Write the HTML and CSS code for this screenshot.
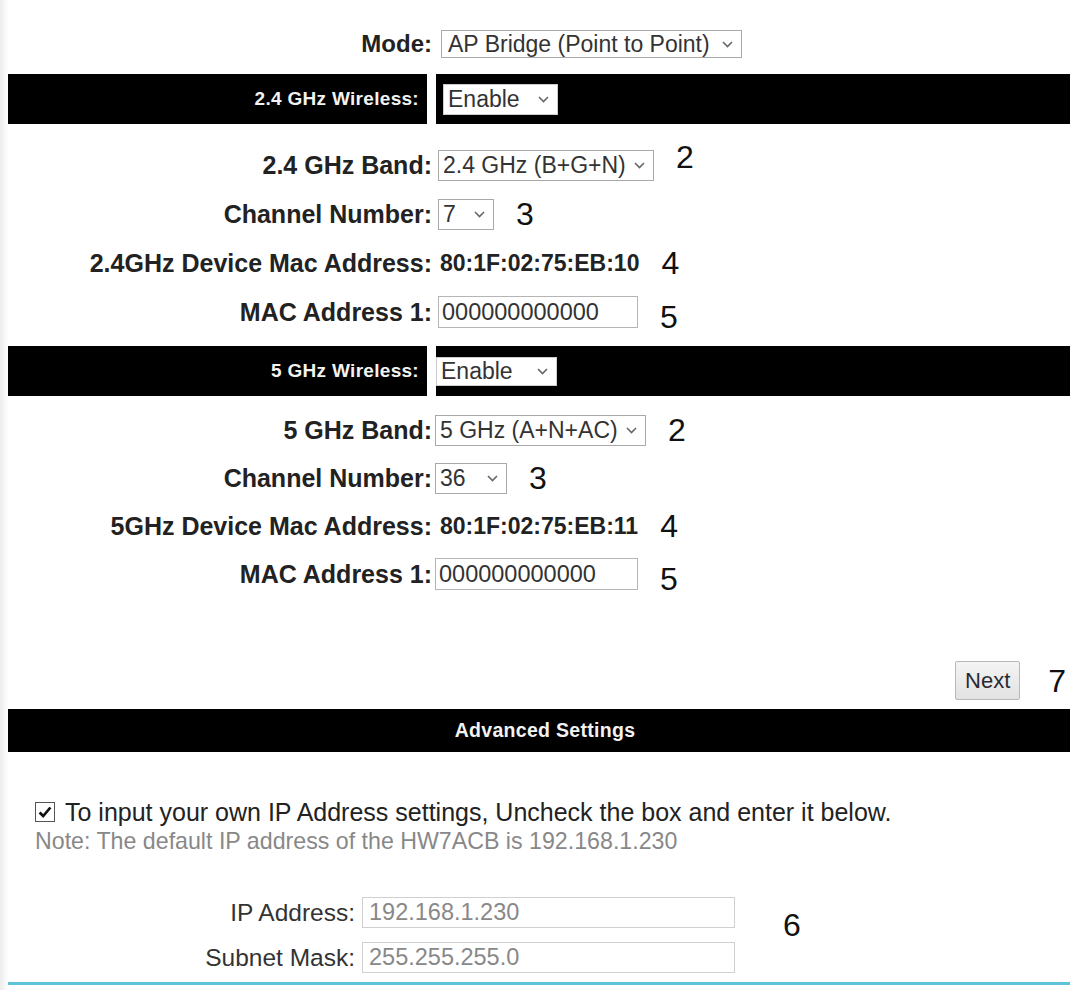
FILE: index.html
```html
<!DOCTYPE html>
<html lang="en">
<head>
<meta charset="utf-8">
<title>Wireless Setup</title>
<link rel="stylesheet" href="styles.css">
</head>
<body>
<div class="page">
  <div class="row mode-row">
    <span class="lbl">Mode:</span>
    <span class="sel w-mode">AP Bridge (Point to Point)<svg class="chev" viewBox="0 0 11 7"><path d="M1 1 L5.5 5.5 L10 1"/></svg></span>
  </div>

  <div class="bar">
    <div class="bar-lbl">2.4 GHz Wireless:</div>
    <div class="bar-val"><span class="sel sel-enable">Enable<svg class="chev" viewBox="0 0 11 7"><path d="M1 1 L5.5 5.5 L10 1"/></svg></span></div>
  </div>

  <div class="section s1">
    <div class="row">
      <span class="lbl">2.4 GHz Band:</span>
      <span class="sel w-band24">2.4 GHz (B+G+N)<svg class="chev" viewBox="0 0 11 7"><path d="M1 1 L5.5 5.5 L10 1"/></svg></span>
      <span class="ann up">2</span>
    </div>
    <div class="row">
      <span class="lbl">Channel Number:</span>
      <span class="sel w-ch7">7<svg class="chev" viewBox="0 0 11 7"><path d="M1 1 L5.5 5.5 L10 1"/></svg></span>
      <span class="ann">3</span>
    </div>
    <div class="row">
      <span class="lbl">2.4GHz Device Mac Address:</span>
      <span class="val">80:1F:02:75:EB:10</span>
      <span class="ann">4</span>
    </div>
    <div class="row">
      <span class="lbl">MAC Address 1:</span>
      <span class="inp w-mac">000000000000</span>
      <span class="ann down">5</span>
    </div>
  </div>

  <div class="bar">
    <div class="bar-lbl">5 GHz Wireless:</div>
    <div class="bar-val b2"><span class="sel sel-enable en2">Enable<svg class="chev" viewBox="0 0 11 7"><path d="M1 1 L5.5 5.5 L10 1"/></svg></span></div>
  </div>

  <div class="section s2">
    <div class="row">
      <span class="lbl">5 GHz Band:</span>
      <span class="sel w-band5">5 GHz (A+N+AC)<svg class="chev" viewBox="0 0 11 7"><path d="M1 1 L5.5 5.5 L10 1"/></svg></span>
      <span class="ann">2</span>
    </div>
    <div class="row">
      <span class="lbl">Channel Number:</span>
      <span class="sel w-ch36">36<svg class="chev" viewBox="0 0 11 7"><path d="M1 1 L5.5 5.5 L10 1"/></svg></span>
      <span class="ann">3</span>
    </div>
    <div class="row">
      <span class="lbl">5GHz Device Mac Address:</span>
      <span class="val">80:1F:02:75:EB:11</span>
      <span class="ann">4</span>
    </div>
    <div class="row">
      <span class="lbl">MAC Address 1:</span>
      <span class="inp w-mac2">000000000000</span>
      <span class="ann down">5</span>
    </div>
  </div>

  <div class="next-row">
    <span class="btn">Next</span>
    <span class="ann ann7">7</span>
  </div>

  <div class="adv-bar">Advanced Settings</div>

  <div class="check-line">
    <span class="cbox"><svg viewBox="0 0 20 20"><path d="M4 10.5 L8 14.5 L16 5"/></svg></span>
    <span>To input your own IP Address settings, Uncheck the box and enter it below.</span>
  </div>
  <div class="note">Note: The default IP address of the HW7ACB is 192.168.1.230</div>

  <div class="ip-block">
    <div class="ip-rows">
      <div class="ip-row">
        <span class="ip-lbl">IP Address:</span>
        <span class="ip-inp">192.168.1.230</span>
      </div>
      <div class="ip-row">
        <span class="ip-lbl">Subnet Mask:</span>
        <span class="ip-inp">255.255.255.0</span>
      </div>
    </div>
    <span class="ann ann6">6</span>
  </div>

  <div class="rule"></div>
</div>
</body>
</html>
```

FILE: styles.css
```css
html, body {
  margin: 0;
  padding: 0;
  background: #fff;
}

body {
  font-family: "Liberation Sans", Arial, sans-serif;
  color: #222;
  background: linear-gradient(to right, #ececec 0, #fafafa 6px, #fff 9px);
  min-height: 990px;
}

.page {
  padding: 0 8px;
  display: flex;
  flex-direction: column;
}

.row {
  display: flex;
  align-items: center;
  height: 32px;
}

.mode-row {
  margin-top: 30px;
  height: 28px;
}

.lbl {
  width: 424px;
  flex: none;
  text-align: right;
  font-weight: bold;
  font-size: 25px;
  color: #222;
  white-space: nowrap;
}

.mode-row .lbl { font-size: 24px; }

.val {
  margin-left: 8px;
  font-weight: bold;
  font-size: 23px;
  color: #222;
  white-space: nowrap;
}

.sel, .inp {
  margin-left: 6px;
  box-sizing: border-box;
  height: 31px;
  display: flex;
  align-items: center;
  border: 1px solid #a9a9a9;
  background: #fff;
  font-size: 23px;
  color: #333;
  padding-left: 4px;
  white-space: nowrap;
  flex: none;
}

.inp {
  height: 32px;
  font-size: 23.5px;
  border-color: #b5b5b5;
  padding-left: 3px;
}

.chev {
  width: 11px;
  height: 7px;
  margin-left: auto;
  margin-right: 8px;
  fill: none;
  stroke: #666;
  stroke-width: 1.6;
}

.mode-row .sel { margin-left: 9px; height: 28px; padding-left: 6px; }
.w-mode { width: 301px; }
.w-band24 { width: 216px; }
.w-ch7 { width: 56px; }
.w-mac { width: 200px; }
.w-band5 { width: 211px; }
.w-ch36 { width: 72px; }
.w-mac2 { width: 203px; }

.s2 .sel, .s2 .inp { margin-left: 3px; }

.ann {
  font-size: 32px;
  color: #111;
  margin-left: 22px;
  line-height: 1;
}
.ann.up { margin-bottom: 16px; }
.ann.down { margin-top: 10px; }

.bar {
  display: flex;
  height: 50px;
  margin-top: 16px;
  gap: 9px;
}

.bar-lbl {
  width: 419px;
  flex: none;
  background: #000;
  color: #f2f2f2;
  font-weight: bold;
  font-size: 19px;
  letter-spacing: 0.3px;
  display: flex;
  align-items: center;
  justify-content: flex-end;
  padding-right: 8px;
  box-sizing: border-box;
}

.bar-val {
  flex: 1;
  background: #000;
  display: flex;
  align-items: center;
  padding-left: 7px;
}

.bar-val.b2 { padding-left: 0; }

.sel-enable {
  margin-left: 0;
  width: 115px;
  height: 31px;
  border-color: #ccc;
  font-size: 23px;
}

.sel-enable.en2 {
  width: 121px;
  height: 29px;
}

.section {
  display: flex;
  flex-direction: column;
}

.s1 { margin-top: 25px; gap: 17px; }
.s2 { margin-top: 18px; gap: 16px; }

.section + .bar { margin-top: 18px; }

.next-row {
  display: flex;
  justify-content: flex-end;
  align-items: center;
  margin-top: 71px;
  height: 39px;
  padding-right: 4px;
}

.btn {
  box-sizing: border-box;
  width: 65px;
  height: 39px;
  border: 1px solid #b8b8b8;
  border-radius: 2px;
  background: linear-gradient(#f4f4f4, #e2e2e2);
  color: #2a2a33;
  font-size: 22px;
  display: flex;
  align-items: center;
  justify-content: center;
}

.ann7 { margin-left: 28px; }

.adv-bar {
  margin-top: 9px;
  height: 43px;
  background: #000;
  color: #f2f2f2;
  font-weight: bold;
  font-size: 19.5px;
  letter-spacing: 0.3px;
  display: flex;
  align-items: center;
  justify-content: center;
  padding-left: 12px;
}

.check-line {
  margin-top: 46px;
  display: flex;
  align-items: center;
  gap: 10px;
  padding-left: 27px;
  font-size: 25px;
  line-height: 28px;
  color: #222;
}

.cbox {
  width: 20px;
  height: 20px;
  box-sizing: border-box;
  border: 1px solid #555;
  background: #fff;
  display: flex;
  flex: none;
}

.cbox svg {
  width: 18px;
  height: 18px;
  fill: none;
  stroke: #111;
  stroke-width: 3;
}

.note {
  margin-top: 2px;
  padding-left: 27px;
  font-size: 23.2px;
  line-height: 26px;
  color: #888;
}

.ip-block {
  margin-top: 43px;
  display: flex;
  align-items: center;
}

.ip-rows {
  display: flex;
  flex-direction: column;
  gap: 14px;
}

.ip-row {
  display: flex;
  align-items: center;
  height: 31px;
}

.ip-lbl {
  width: 347px;
  text-align: right;
  font-size: 24.5px;
  color: #333;
  white-space: nowrap;
}

.ip-inp {
  margin-left: 7px;
  box-sizing: border-box;
  width: 373px;
  height: 31px;
  border: 1px solid #d0d0d0;
  display: flex;
  align-items: center;
  padding-left: 6px;
  font-size: 23.5px;
  color: #888;
}

.ann6 { margin-left: 48px; margin-bottom: 20px; }

.rule {
  margin-top: 9px;
  height: 3px;
  background: #5ec2d9;
}
```
